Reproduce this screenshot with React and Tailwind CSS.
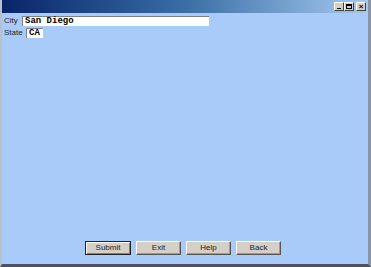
import React from 'react';

const Btn = ({ label, primary }) => (
  <button
    className={
      primary
        ? 'w-[46px] h-[14px] bg-[#d4d0c8] text-[8px] leading-none text-[#222] border border-[#222] shadow-[inset_1px_1px_0_#fff,inset_-1px_-1px_0_#808080]'
        : 'w-[45px] h-[14px] bg-[#d4d0c8] text-[8px] leading-none text-[#222] border-t border-l border-[#fff] border-r border-b border-r-[#555] border-b-[#555] shadow-[inset_-1px_-1px_0_#999]'
    }
    style={{ fontFamily: 'Tahoma, "Liberation Sans", sans-serif' }}
  >
    {label}
  </button>
);

const Ctrl = ({ children }) => (
  <div className="w-[10px] h-[9px] bg-[#d4d0c8] border-t border-l border-t-white border-l-white border-r border-b border-r-[#404040] border-b-[#404040] flex items-center justify-center">
    {children}
  </div>
);

export default function App() {
  return (
    <div
      className="w-[371px] h-[267px] flex flex-col bg-[#d4d0c8] border-r-[3px] border-r-[#8a94a8] border-b-[3px] border-b-[#505060] border-l-[2px] border-l-[#b8c0cc]"
      style={{ fontFamily: 'Tahoma, "Liberation Sans", sans-serif' }}
    >
      <div className="h-[13px] flex items-center justify-end pr-[2px] bg-gradient-to-r from-[#0a246a] via-[#3a6ea5] to-[#a6caf0]">
        <Ctrl>
          <div className="w-[4px] h-[1px] bg-black mt-[4px] -ml-[1px]" />
        </Ctrl>
        <Ctrl>
          <div className="w-[6px] h-[5px] border border-black border-t-2" />
        </Ctrl>
        <div className="ml-[2px]">
          <Ctrl>
            <span className="text-[8px] leading-none font-bold text-black">×</span>
          </Ctrl>
        </div>
      </div>
      <div className="flex-1 bg-[#a8cbfa] flex flex-col pt-[2px] pl-[2px]">
        <div className="flex items-center h-[11px]">
          <span className="w-[18px] text-[8px] text-[#222] leading-none">City</span>
          <div className="w-[187px] h-[10px] bg-white border-t border-l border-[#808080] border-r-0 border-b-0 flex items-center pl-[2px]">
            <span className="text-[9px] font-bold leading-none text-black" style={{ fontFamily: '"Liberation Mono", monospace' }}>San Diego</span>
          </div>
        </div>
        <div className="flex items-center h-[11px] mt-[1px]">
          <span className="w-[22px] text-[8px] text-[#222] leading-none">State</span>
          <div className="w-[17px] h-[10px] bg-white border-t border-l border-[#808080] border-r-0 border-b-0 flex items-center pl-[2px]">
            <span className="text-[9px] font-bold leading-none text-black" style={{ fontFamily: '"Liberation Mono", monospace' }}>CA</span>
          </div>
        </div>
        <div className="flex-1" />
        <div className="flex justify-start gap-[5px] pl-[81px] pb-[9px]">
          <Btn label="Submit" primary />
          <Btn label="Exit" />
          <Btn label="Help" />
          <Btn label="Back" />
        </div>
      </div>
    </div>
  );
}
